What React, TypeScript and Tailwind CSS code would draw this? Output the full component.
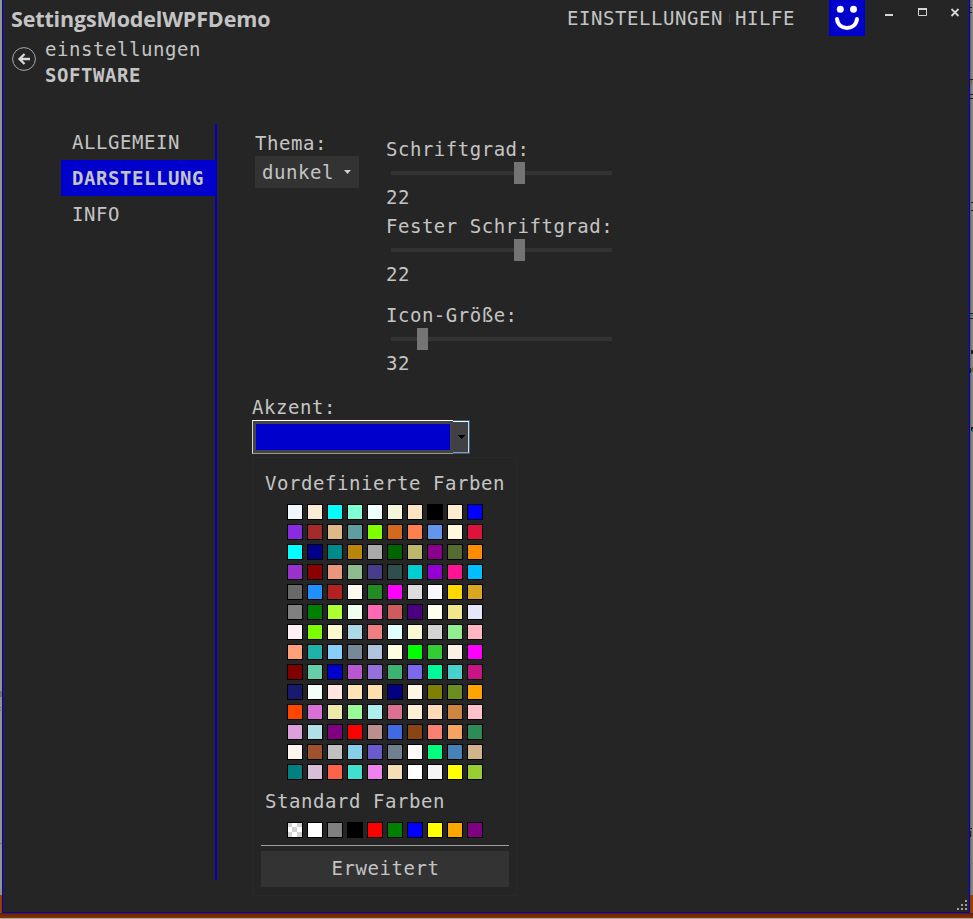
import React from "react";

const predefined: string[][] = [
  ["#f0f8ff", "#faebd7", "#00ffff", "#7fffd4", "#f0ffff", "#f5f5dc", "#ffe4c4", "#000000", "#ffebcd", "#0000ff"],
  ["#8a2be2", "#a52a2a", "#deb887", "#5f9ea0", "#7fff00", "#d2691e", "#ff7f50", "#6495ed", "#fff8dc", "#dc143c"],
  ["#00ffff", "#00008b", "#008b8b", "#b8860b", "#a9a9a9", "#006400", "#bdb76b", "#8b008b", "#556b2f", "#ff8c00"],
  ["#9932cc", "#8b0000", "#e9967a", "#8fbc8f", "#483d8b", "#2f4f4f", "#00ced1", "#9400d3", "#ff1493", "#00bfff"],
  ["#696969", "#1e90ff", "#b22222", "#fffaf0", "#228b22", "#ff00ff", "#dcdcdc", "#f8f8ff", "#ffd700", "#daa520"],
  ["#808080", "#008000", "#adff2f", "#f0fff0", "#ff69b4", "#cd5c5c", "#4b0082", "#fffff0", "#f0e68c", "#e6e6fa"],
  ["#fff0f5", "#7cfc00", "#fffacd", "#add8e6", "#f08080", "#e0ffff", "#fafad2", "#d3d3d3", "#90ee90", "#ffb6c1"],
  ["#ffa07a", "#20b2aa", "#87cefa", "#778899", "#b0c4de", "#ffffe0", "#00ff00", "#32cd32", "#faf0e6", "#ff00ff"],
  ["#800000", "#66cdaa", "#0000cd", "#ba55d3", "#9370db", "#3cb371", "#7b68ee", "#00fa9a", "#48d1cc", "#c71585"],
  ["#191970", "#f5fffa", "#ffe4e1", "#ffe4b5", "#ffdead", "#000080", "#fdf5e6", "#808000", "#6b8e23", "#ffa500"],
  ["#ff4500", "#da70d6", "#eee8aa", "#98fb98", "#afeeee", "#db7093", "#ffefd5", "#ffdab9", "#cd853f", "#ffc0cb"],
  ["#dda0dd", "#b0e0e6", "#800080", "#ff0000", "#bc8f8f", "#4169e1", "#8b4513", "#fa8072", "#f4a460", "#2e8b57"],
  ["#fff5ee", "#a0522d", "#c0c0c0", "#87ceeb", "#6a5acd", "#708090", "#fffafa", "#00ff7f", "#4682b4", "#d2b48c"],
  ["#008080", "#d8bfd8", "#ff6347", "#40e0d0", "#ee82ee", "#f5deb3", "#ffffff", "#f5f5f5", "#ffff00", "#9acd32"],
];

const standard = ["transparent", "#ffffff", "#808080", "#000000", "#ff0000", "#008000", "#0000ff", "#ffff00", "#ffa500", "#800080"];

function Swatch({ color }: { color: string }) {
  if (color === "transparent") {
    return (
      <div className="size-4 border border-black bg-white">
        <svg className="block size-[14px]" viewBox="0 0 14 14" fill="#d3d3d3" shapeRendering="crispEdges">
          <path d="M0 0h4v4H0zM9 0h5v4H9zM4 4h5v5H4zM0 9h4v5H0zM9 9h5v5H9z" />
        </svg>
      </div>
    );
  }
  return <div className="size-4 border border-black" style={{ backgroundColor: color }} />;
}

function SliderField({ label, value, offset, gap }: { label: string; value: number; offset: number; gap: string }) {
  return (
    <div className={gap}>
      <div className="h-[26px] leading-[26px]">{label}</div>
      <div className="ml-[5px] flex h-[22px] w-[221px] items-center">
        <div className="h-1 bg-[#333333]" style={{ width: offset }} />
        <div className="h-[22px] w-[11px] bg-[#747474]" />
        <div className="h-1 flex-1 bg-[#333333]" />
      </div>
      <div className="h-[26px] leading-[26px]">{value}</div>
    </div>
  );
}

function TitleBar() {
  return (
    <header className="flex h-9 items-start">
      <h1 className="ml-2 w-[400px] font-['Open_Sans','Noto_Sans',sans-serif] text-[21.5px] leading-[38px] font-bold tracking-[-0.15px]">
        SettingsModelWPFDemo
      </h1>
      <nav className="ml-[156px] flex w-[262px] shrink-0 items-center leading-9">
        <span>EINSTELLUNGEN</span>
        <span className="ml-[6px] h-[9px] w-px bg-[#3c3c3c]" />
        <span className="ml-[5px]">HILFE</span>
      </nav>
      <div className="flex size-9 shrink-0 bg-[#0000cd]">
        <svg viewBox="0 0 36 36" className="size-9">
          <circle cx="11.3" cy="9.3" r="3.5" fill="#fff" />
          <circle cx="24.5" cy="9.3" r="3.5" fill="#fff" />
          <path d="M8 19C9.5 31 26.500 31 28 19" fill="none" stroke="#fff" strokeWidth="4" strokeLinecap="round" />
        </svg>
      </div>
      <svg viewBox="0 0 104 36" className="h-9 w-[104px] shrink-0" fill="none" stroke="#d4d4d4">
        <path d="M20 15h8" strokeWidth="2" />
        <path d="M53 9h9" strokeWidth="2" />
        <path d="M53.500 9v6.500h8V9" />
        <path d="M86.500 9l7 7M93.500 9l-7 7" strokeWidth="1.8" />
      </svg>
    </header>
  );
}

function Heading() {
  return (
    <div className="flex h-[88px]">
      <svg viewBox="0 0 24 24" className="mt-[11px] ml-[9px] size-6 shrink-0" fill="none">
        <circle cx="12" cy="12" r="11.4" stroke="#a8a8a8" strokeWidth="1" />
        <path d="M18 12H8M12.500 7L7.500 12l5 5" stroke="#d8d8d8" strokeWidth="2.300" />
      </svg>
      <div className="ml-[9px] leading-[26px]">
        <div>einstellungen</div>
        <div className="font-bold">SOFTWARE</div>
      </div>
    </div>
  );
}

function Sidebar() {
  return (
    <nav className="ml-[58px] flex h-[756px] w-[156px] shrink-0 flex-col border-r-2 border-[#0000cd] leading-9">
      <div className="h-9 pl-[11px]">ALLGEMEIN</div>
      <div className="h-9 bg-[#0000cd] pl-[11px] font-bold">DARSTELLUNG</div>
      <div className="h-9 pl-[11px]">INFO</div>
    </nav>
  );
}

function AccentPicker() {
  return (
    <section className="w-[265px]">
      <div className="h-[26px] leading-[26px]">Akzent:</div>
      <div className="flex h-[34px] w-[218px]">
        <div className="flex w-[201px] border-y border-l border-t-[#ffffff] border-b-[#969696] border-l-[#d8d8d8] bg-[#444444] p-[3px]">
          <div className="flex-1 bg-[#0000cd]" />
        </div>
        <div className="flex-1 border-y border-r border-[#2c628b]">
          <div className="flex h-8 w-4 items-center border-y border-r border-t-white border-r-[#d8d8d8] border-b-[#969696] bg-[#414045]">
            <svg viewBox="0 0 7 4" className="ml-[5px] h-1 w-[7px]" shapeRendering="crispEdges">
              <path d="M0 0h7v1H0zM1 1h5v1H1zM2 2h3v1H2zM3 3h1v1H3z" fill="#000" />
            </svg>
          </div>
        </div>
      </div>
      <div className="mt-[3px] h-[439px] border border-[#292929] px-2 pt-3">
        <div className="h-[26px] pl-1 leading-[26px]">Vordefinierte Farben</div>
        <div className="mt-2 ml-[26px] grid w-[196px] grid-cols-10 gap-1">
          {predefined.flat().map((c, i) => (
            <Swatch key={i} color={c} />
          ))}
        </div>
        <div className="mt-2 h-[26px] pl-1 leading-[26px]">Standard Farben</div>
        <div className="mt-2 ml-[26px] grid w-[196px] grid-cols-10 gap-1">
          {standard.map((c) => (
            <Swatch key={c} color={c} />
          ))}
        </div>
        <div className="mt-[7px] h-px w-[248px] bg-[#a0a0a0]" />
        <button className="mt-[5px] block h-9 w-[248px] bg-[#333333] pb-[2px] pl-px text-center leading-[34px] tracking-[0.56px]">
          Erweitert
        </button>
      </div>
    </section>
  );
}

function Appearance() {
  return (
    <main className="pl-[35px]">
      <div className="flex h-[270px] pl-[3px]">
        <div className="w-[131px] pt-[6px]">
          <div className="h-[26px] leading-[26px]">Thema:</div>
          <div className="flex h-8 w-[104px] items-center bg-[#333333] pl-[7px] leading-8">
            <span className="w-[82px]">dunkel</span>
            <svg viewBox="0 0 7 4" className="h-1 w-[7px]">
              <path d="M0 0h7L3.500 4z" fill="#d0d0d0" />
            </svg>
          </div>
        </div>
        <div className="tracking-[0.52px]">
          <SliderField label="Schriftgrad:" value={22} offset={123} gap="mt-3" />
          <SliderField label="Fester Schriftgrad:" value={22} offset={123} gap="mt-[3px]" />
          <SliderField label="Icon-Größe:" value={32} offset={26} gap="mt-[15px]" />
        </div>
      </div>
      <AccentPicker />
    </main>
  );
}

function Backdrop() {
  return (
    <svg className="absolute inset-0 h-[919px] w-[973px]" viewBox="0 0 973 919" shapeRendering="crispEdges">
      <defs>
        <linearGradient id="edge" x1="0" x2="1" y1="0" y2="0">
          <stop offset="0" stopColor="#67666a" />
          <stop offset="1" stopColor="#918f93" />
        </linearGradient>
        <linearGradient id="floor" x1="0" x2="0" y1="0" y2="1">
          <stop offset="0" stopColor="#572000" />
          <stop offset="1" stopColor="#8b3500" />
        </linearGradient>
      </defs>
      <rect width="2" height="895" fill="#929292" />
      <rect x="970" width="3" height="895" fill="url(#edge)" />
      <rect y="895" width="973" height="18" fill="#9b3d00" />
      <rect y="913" width="973" height="5" fill="url(#floor)" />
      <rect y="918" width="973" height="1" fill="#a9a9a9" />
      <path d="M970 7h2v1h-2zM970 12h2v1h-2zM970 79h3v1h-3zM970 94h3v1h-3zM970 98h3v1h-3zM971 202h2v1h-2zM971 210h2v1h-2zM970 313h3v1h-3zM970 318h3v1h-3zM971 350h2v4h-2zM970 368h1v5h-1zM971 427h2v4h-2zM970 828h2v1h-2zM970 831h1v6h-1z" fill="#211c2d" />
      <path d="M970 80h2v4h-2zM972 367h1v5h-1zM971 831h1v6h-1z" fill="#876229" />
      <path d="M970 315h3v1h-3zM971 369h1v3h-1zM972 429h1v3h-1z" fill="#286f7e" />
      <path d="M0 691h2v6H0zM0 707h1v1H0zM0 710h1v1H0zM0 843h2v1H0zM970 863h3v1h-3z" fill="#727272" />
    </svg>
  );
}

export default function App() {
  return (
    <div className="relative h-[919px] w-[973px] overflow-hidden pr-[3px] pl-[2px] font-['DejaVu_Sans_Mono','Liberation_Mono',monospace] text-[19px] tracking-[0.56px] whitespace-nowrap text-[#c4c4c4]">
      <Backdrop />
      <div className="relative h-[913px] w-[968px] border-r border-b border-l border-[#0000cd] bg-[#252525]">
        <TitleBar />
        <Heading />
        <div className="flex">
          <Sidebar />
          <Appearance />
        </div>
        <svg className="absolute right-[2px] bottom-[2px] size-[10px]" viewBox="0 0 10 10" fill="#a0a0a0" shapeRendering="crispEdges">
          <path d="M8 0h2v2H8zM4 4h2v2H4zM8 4h2v2H8zM0 8h2v2H0zM4 8h2v2H4zM8 8h2v2H8z" />
        </svg>
      </div>
    </div>
  );
}
